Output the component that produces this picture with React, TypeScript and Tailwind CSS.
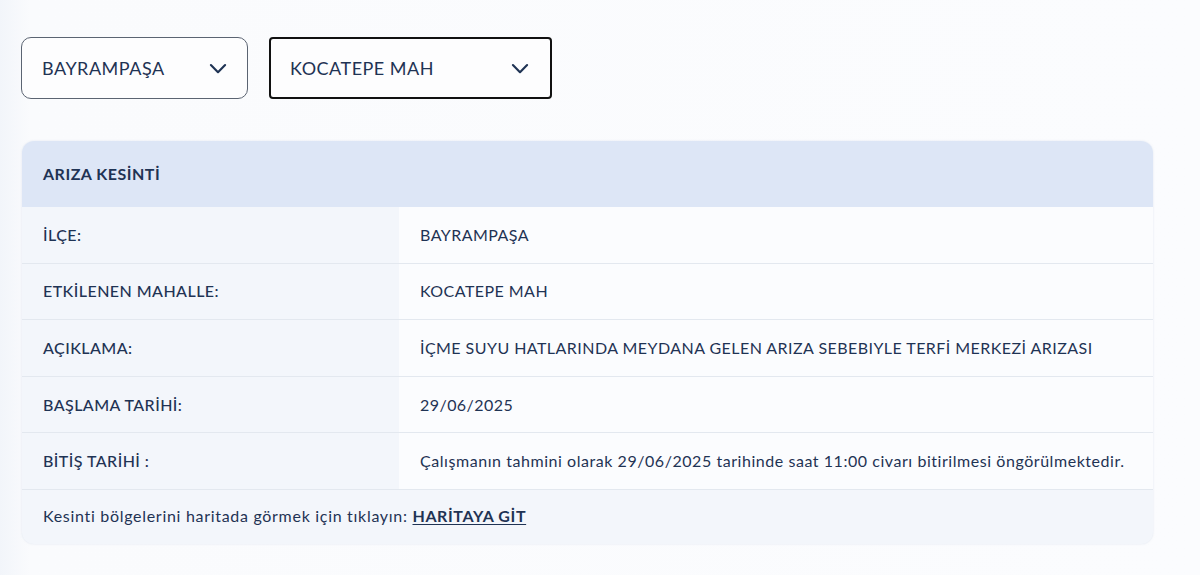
import React from 'react';

const rows = [
    { label: 'İLÇE:', value: 'BAYRAMPAŞA' },
    { label: 'ETKİLENEN MAHALLE:', value: 'KOCATEPE MAH' },
    { label: 'AÇIKLAMA:', value: 'İÇME SUYU HATLARINDA MEYDANA GELEN ARIZA SEBEBIYLE TERFİ MERKEZİ ARIZASI' },
    { label: 'BAŞLAMA TARİHİ:', value: '29/06/2025' },
    { label: 'BİTİŞ TARİHİ :', value: 'Çalışmanın tahmini olarak 29/06/2025 tarihinde saat 11:00 civarı bitirilmesi öngörülmektedir.' },
];

function Chevron() {
    return (
        <svg width="20" height="20" viewBox="0 0 24 24" fill="none" stroke="currentColor" strokeWidth="2.6" strokeLinecap="round" strokeLinejoin="round">
            <path d="M3.5 8.5l8.5 8.5 8.5-8.5" />
        </svg>
    );
}

export default function App() {
    return (
        <div className="min-h-[575px] w-full bg-[linear-gradient(90deg,#f2f5fa_0px,#fafbfd_30px,#fbfcfe_100%)] font-['Lato',sans-serif] text-[#1f3354]">
            <div className="px-[21px] pt-[37px]">
                <div className="flex gap-[21px]">
                    <div className="flex h-[62px] w-[227px] items-center justify-between rounded-[10px] border border-[#5b6472] bg-[#fdfdfe] pl-[20px] pr-[19px]">
                        <span className="text-[18px] tracking-[0.5px]">BAYRAMPAŞA</span>
                        <Chevron />
                    </div>
                    <div className="flex h-[62px] w-[283px] items-center justify-between rounded-[4px] border-2 border-[#111] bg-[#fdfdfe] pl-[19px] pr-[20px]">
                        <span className="text-[18px] tracking-[0.5px]">KOCATEPE MAH</span>
                        <Chevron />
                    </div>
                </div>

                <div className="ml-[1px] mt-[42px] w-[1131px] overflow-hidden rounded-[12px] bg-[#f3f6fb] shadow-[0_0_2px_rgba(200,210,225,0.5)]">
                    <div className="flex h-[66px] items-center bg-[#dde6f6] px-[21px]">
                        <span className="text-[16px] font-bold tracking-[0.5px]">ARIZA KESİNTİ</span>
                    </div>
                    {rows.map((r, i) => (
                        <div key={r.label} className="grid h-[56.6px] grid-cols-[377px_1fr] border-b border-[#e3e8ef] text-[16px] tracking-[0.45px]">
                            <div className="flex items-center bg-[#f3f6fb] px-[21px] font-medium">{r.label}</div>
                            <div className={`flex items-center bg-[#fbfcfe] px-[21px] ${i === 4 ? 'tracking-[0.55px]' : ''}`}>{r.value}</div>
                        </div>
                    ))}
                    <div className="flex h-[54px] items-center px-[21px] pb-[2px] text-[16px] tracking-[0.7px]">
                        <span>Kesinti bölgelerini haritada görmek için tıklayın:&nbsp;</span>
                        <a className="font-bold tracking-[0.6px] underline underline-offset-2">HARİTAYA GİT</a>
                    </div>
                </div>
            </div>
        </div>
    );
}
